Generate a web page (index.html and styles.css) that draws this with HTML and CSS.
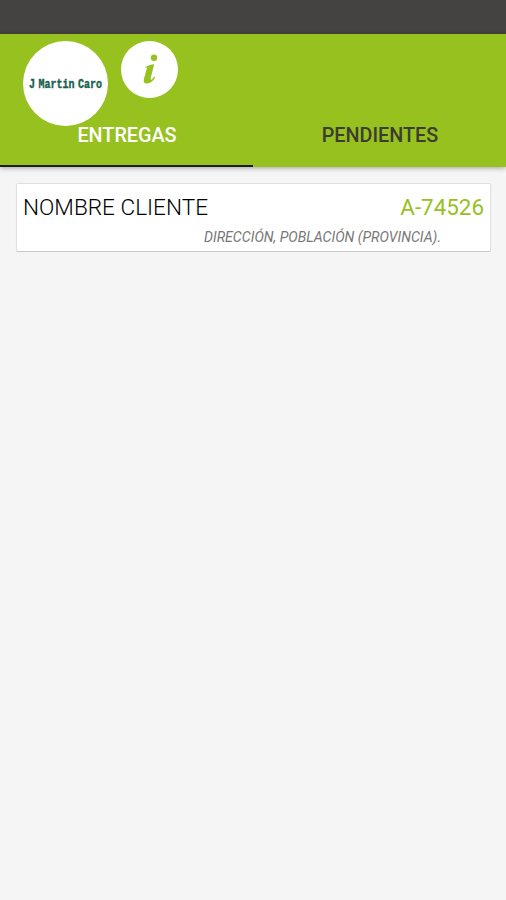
FILE: index.html
```html
<!DOCTYPE html>
<html lang="es">

<head>
    <meta charset="UTF-8">
    <meta name="viewport" content="width=device-width, initial-scale=1.0">
    <title>Entregas</title>
    <link rel="stylesheet" href="styles.css">
</head>

<body>
    <div class="status-bar"></div>

    <header>
        <div class="logos">
            <div class="logo">
                <svg width="85" height="85" viewBox="0 0 85 85">
                    <text x="6" y="46.5" textLength="73" lengthAdjust="spacingAndGlyphs">J Martin Caro</text>
                </svg>
            </div>
            <div class="info">
                <svg width="57" height="57" viewBox="0 0 57 57">
                    <circle cx="33" cy="16.8" r="3.2" />
                    <path d="M24 26.4C26.6 24.4 29.8 23.4 33.2 23.2L29.8 36.6C29.3 38.8 30 39.2 31.2 38L33.2 35.6L34.2 36.2C31.8 40.6 29 42.4 26.2 42.4C23 42.4 22.2 40.4 23 37.4L25.8 27.8C26.2 26 25.8 25.8 24.4 27.2Z" />
                </svg>
            </div>
        </div>
        <nav class="tabs">
            <a class="tab active">ENTREGAS</a>
            <a class="tab">PENDIENTES</a>
        </nav>
    </header>

    <main>
        <div class="card">
            <div class="card-top">
                <span class="cliente">NOMBRE CLIENTE</span>
                <span class="codigo">A-74526</span>
            </div>
            <p class="direccion">DIRECCIÓN, POBLACIÓN (PROVINCIA).</p>
        </div>
    </main>
</body>

</html>
```

FILE: styles.css
```css
body {
    font-family: Roboto, sans-serif;
    background-color: #f5f5f5;
    margin: 0;
    padding: 0;
}

.status-bar {
    height: 33px;
    background-color: #444342;
    border-bottom: 1px solid #48443a;
}

header {
    background-color: #96c11f;
    box-shadow: 0 1px 5px rgba(0, 0, 0, 0.35);
    padding-top: 7px;
}

.logos {
    display: flex;
    align-items: flex-start;
    gap: 13px;
    padding-left: 23px;
}

.logo, .info {
    background-color: #fff;
    border-radius: 50%;
}

.logo {
    width: 85px;
    height: 85px;
}

.info {
    width: 57px;
    height: 57px;
}

.logo svg, .info svg {
    display: block;
    overflow: visible;
}

.logo text {
    font-family: "Liberation Mono", monospace;
    font-weight: bold;
    font-size: 12px;
    word-spacing: -3px;
    fill: #17604f;
    stroke: #17604f;
    stroke-width: 0.4px;
}

.info svg {
    fill: #96c11f;
}

.tabs {
    display: flex;
}

.tab {
    flex: 1;
    height: 39px;
    border-bottom: 2px solid transparent;
    color: #3c3c32;
    font-size: 19.8px;
    font-weight: 500;
    line-height: 20px;
    text-align: center;
    text-indent: 1px;
}

.tab.active {
    color: #fff;
    border-bottom-color: #1d1d1b;
}

main {
    padding: 16px 15px 0 16px;
}

.card {
    height: 67px;
    background-color: #fff;
    border: 1px solid #e0e0e0;
    border-bottom-color: #c8c8c8;
    border-radius: 2px;
    box-shadow: 0 1px 1px rgba(0, 0, 0, 0.1);
}

.card-top {
    display: flex;
    justify-content: space-between;
    align-items: baseline;
    padding: 10px 6px 0;
    font-size: 22.6px;
    font-weight: 300;
    line-height: 26px;
}

.cliente {
    color: #000;
}

.codigo {
    color: #96c11f;
    font-weight: 400;
    font-size: 22.4px;
}

.direccion {
    margin: 8px 49px 0 0;
    color: #777;
    font-size: 14.1px;
    font-style: italic;
    line-height: 16px;
    text-align: right;
}
```
